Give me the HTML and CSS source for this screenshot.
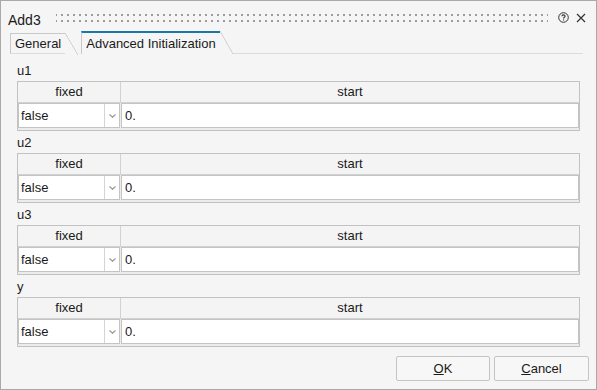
FILE: index.html
```html
<!DOCTYPE html>
<html lang="en">
<head>
    <meta charset="UTF-8">
    <title>Add3</title>
    <link rel="stylesheet" href="styles.css">
</head>
<body>
    <div class="window">
        <div class="titlebar">
            <span class="title">Add3</span>
            <div class="grip"></div>
            <span class="tb-icon">
                <svg width="11" height="11" viewBox="0 0 11 11">
                    <circle cx="5.5" cy="5.5" r="4.8" fill="none" stroke="#333" stroke-width="1"/>
                    <path d="M3.9 4.3 C3.9 2.4 7.1 2.4 7.1 4.2 C7.1 5.3 5.5 5.3 5.5 6.6" fill="none" stroke="#333" stroke-width="1.1"/>
                    <rect x="5" y="7.4" width="1.1" height="1.1" fill="#333"/>
                </svg>
            </span>
            <span class="tb-icon close">
                <svg width="10" height="10" viewBox="0 0 10 10">
                    <path d="M1 1 L9 9 M9 1 L1 9" stroke="#333" stroke-width="1.2"/>
                </svg>
            </span>
        </div>

        <div class="tabs">
            <div class="tab">General</div>
            <div class="tab active">Advanced Initialization</div>
            <div class="tab-rest"></div>
        </div>

        <div class="content">
            <div class="group">
                <div class="label">u1</div>
                <div class="grid">
                    <div class="head first">fixed</div>
                    <div class="head">start</div>
                    <div class="combo"><span class="val">false</span><span class="arrow"><svg width="7" height="4" viewBox="0 0 7 4"><path d="M0.5 0.5 L3.5 3.2 L6.5 0.5" fill="none" stroke="#999" stroke-width="1.2"/></svg></span></div>
                    <div class="field">0.</div>
                </div>
            </div>
            <div class="group">
                <div class="label">u2</div>
                <div class="grid">
                    <div class="head first">fixed</div>
                    <div class="head">start</div>
                    <div class="combo"><span class="val">false</span><span class="arrow"><svg width="7" height="4" viewBox="0 0 7 4"><path d="M0.5 0.5 L3.5 3.2 L6.5 0.5" fill="none" stroke="#999" stroke-width="1.2"/></svg></span></div>
                    <div class="field">0.</div>
                </div>
            </div>
            <div class="group">
                <div class="label">u3</div>
                <div class="grid">
                    <div class="head first">fixed</div>
                    <div class="head">start</div>
                    <div class="combo"><span class="val">false</span><span class="arrow"><svg width="7" height="4" viewBox="0 0 7 4"><path d="M0.5 0.5 L3.5 3.2 L6.5 0.5" fill="none" stroke="#999" stroke-width="1.2"/></svg></span></div>
                    <div class="field">0.</div>
                </div>
            </div>
            <div class="group">
                <div class="label">y</div>
                <div class="grid">
                    <div class="head first">fixed</div>
                    <div class="head">start</div>
                    <div class="combo"><span class="val">false</span><span class="arrow"><svg width="7" height="4" viewBox="0 0 7 4"><path d="M0.5 0.5 L3.5 3.2 L6.5 0.5" fill="none" stroke="#999" stroke-width="1.2"/></svg></span></div>
                    <div class="field">0.</div>
                </div>
            </div>
        </div>

        <div class="footer">
            <button class="btn"><u>O</u>K</button>
            <button class="btn"><u>C</u>ancel</button>
        </div>
    </div>
</body>
</html>
```

FILE: styles.css
```css
body {
    margin: 0;
    font-family: "Liberation Sans", Arial, sans-serif;
    font-size: 13px;
    color: #1a1a1a;
    background-color: #f5f5f5;
}
.window {
    width: 597px;
    height: 390px;
    box-sizing: border-box;
    border: 1px solid #a9a9a9;
    background-color: #f5f5f5;
    display: flex;
    flex-direction: column;
}
.titlebar {
    display: flex;
    align-items: flex-start;
    height: 19px;
    padding: 11px 10px 0 7px;
}
.title {
    font-size: 14px;
    line-height: 16px;
    width: 33px;
}
.grip {
    flex: 1;
    height: 12px;
    margin: 0 10px 0 15px;
    background-image: linear-gradient(90deg, #f5f5f5 4px, transparent 4px),
                      linear-gradient(#f5f5f5 2px, #9c9c9c 2px, #9c9c9c 4px, #f5f5f5 4px);
    background-size: 6px 6px;
    background-position: 1px 0;
}
.tb-icon {
    display: flex;
}
.tb-icon.close {
    margin-left: 7px;
    margin-top: 1px;
}
.tabs {
    display: flex;
    align-items: flex-end;
    height: 23px;
    padding-left: 9px;
    margin-right: 13px;
}
.tab {
    position: relative;
    height: 21px;
    line-height: 20px;
    padding: 0 4px;
    margin-right: 16px;
    border-left: 1px solid #c8c8c8;
    border-top: 1px solid #c8c8c8;
    border-bottom: 1px solid #dcdcdc;
    box-sizing: border-box;
}
.tab::after {
    content: "";
    position: absolute;
    top: -1px;
    right: -13px;
    width: 13px;
    height: 22px;
    background: linear-gradient(to top right, transparent calc(50% - 0.7px), #c8c8c8 50%, transparent calc(50% + 0.7px));
}
.tab.active {
    height: 23px;
    line-height: 21px;
    padding: 0 4px 0 4px;
    margin-right: 13px;
    border-top: 2px solid #1a78a8;
    border-bottom: none;
}
.tab.active::after {
    top: -2px;
    height: 23px;
}
.tab-rest {
    flex: 1;
    border-bottom: 1px solid #dcdcdc;
}
.content {
    flex: 1;
    padding: 9px 16px 0 16px;
}
.group {
    margin-bottom: 4px;
}
.label {
    line-height: 15px;
    margin-bottom: 3px;
}
.grid {
    display: grid;
    grid-template-columns: 103px 1fr;
    border: 1px solid #c2c2c2;
    padding-bottom: 2px;
    background-color: #ececec;
}
.head {
    height: 20px;
    line-height: 20px;
    text-align: center;
    background-color: #f4f4f4;
    border-bottom: 1px solid #d2d2d2;
}
.head.first {
    border-right: 1px solid #d2d2d2;
}
.combo {
    display: flex;
    height: 25px;
    margin-right: 1px;
    box-sizing: border-box;
    border: 1px solid #c4c4c4;
    background-color: #fff;
}
.val {
    flex: 1;
    padding-left: 2px;
    line-height: 23px;
    border-right: 1px solid #d4d4d4;
}
.arrow {
    width: 14px;
    display: flex;
    align-items: center;
    justify-content: center;
    padding-top: 1px;
}
.field {
    height: 25px;
    box-sizing: border-box;
    border: 1px solid #c4c4c4;
    background-color: #fff;
    padding-left: 3px;
    line-height: 23px;
}
.footer {
    display: flex;
    justify-content: flex-end;
    gap: 4px;
    padding: 0 7px 8px 0;
}
.btn {
    width: 94px;
    height: 25px;
    font-family: "Liberation Sans", Arial, sans-serif;
    font-size: 13px;
    color: #1a1a1a;
    background-color: #f7f7f7;
    border: 1px solid #c4c4c4;
    border-radius: 2px;
    padding: 0;
}
.btn + .btn {
    width: 95px;
}
```
